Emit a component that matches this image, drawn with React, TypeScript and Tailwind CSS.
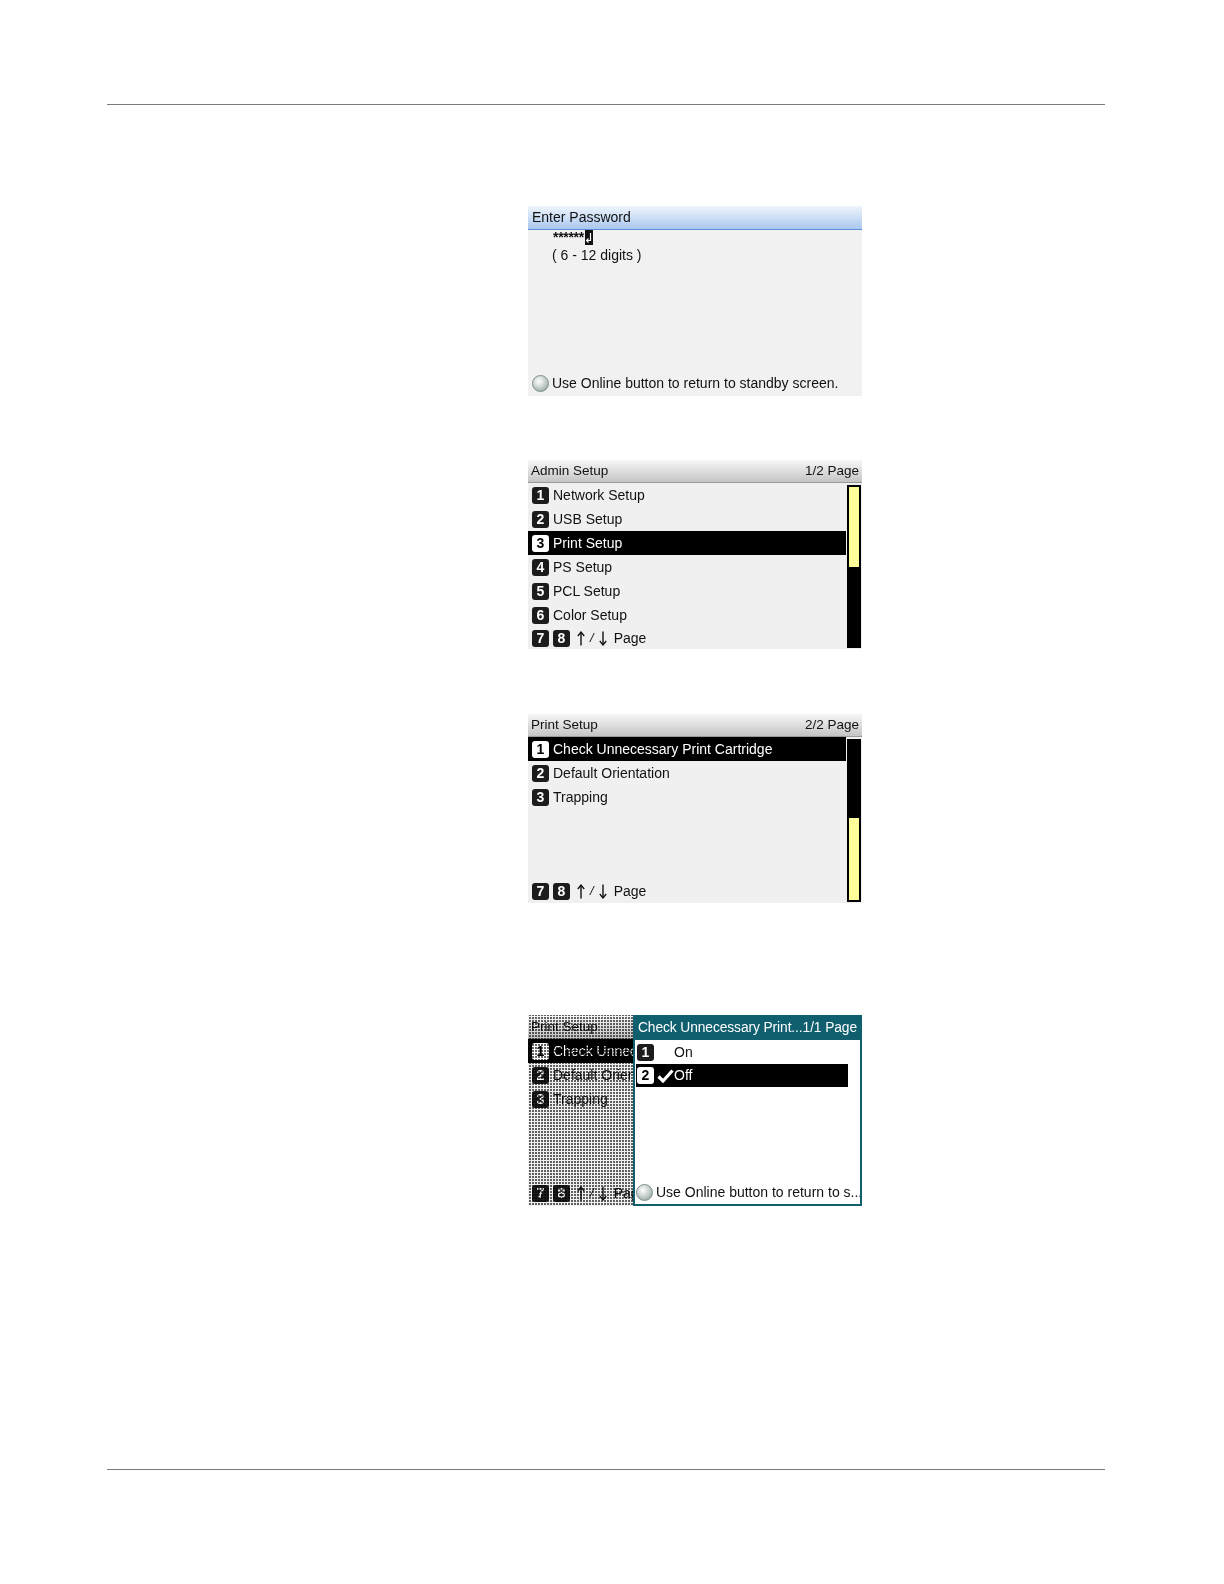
import React from "react";

const FONT = { fontFamily: '"Liberation Sans", Arial, sans-serif' };

function Badge({ n, inv = false }: { n: string; inv?: boolean }) {
  return (
    <span
      className={
        "flex h-[17px] w-[17px] shrink-0 items-center justify-center rounded-[3px] text-[14px] font-bold leading-[17px] " +
        (inv ? "bg-white text-black" : "bg-[#1c1c1c] text-white")
      }
    >
      {n}
    </span>
  );
}

function UpArrow() {
  return (
    <svg width="8" height="15" viewBox="0 0 8 15" className="shrink-0">
      <path d="M4 1.5 V14.5" stroke="#111" strokeWidth="1.4" fill="none" />
      <path d="M0.8 5 L4 1 L7.2 5" stroke="#111" strokeWidth="1.3" fill="none" />
    </svg>
  );
}

function DownArrow() {
  return (
    <svg width="8" height="15" viewBox="0 0 8 15" className="shrink-0">
      <path d="M4 0.5 V13.5" stroke="#111" strokeWidth="1.4" fill="none" />
      <path d="M0.8 10 L4 14 L7.2 10" stroke="#111" strokeWidth="1.3" fill="none" />
    </svg>
  );
}

function PageFooter() {
  return (
    <div className="flex h-[24px] items-center gap-[4px] whitespace-nowrap pl-[4px] text-[14px] text-[#111]">
      <Badge n="7" />
      <Badge n="8" />
      <span className="ml-[3px] flex items-center">
        <UpArrow />
        <span className="mx-[5px] text-[13px] italic">/</span>
        <DownArrow />
        <span className="ml-[7px]">Page</span>
      </span>
    </div>
  );
}

function OnlineDot() {
  return (
    <span className="h-[17px] w-[17px] shrink-0 rounded-full border border-[#7f8f8a] [background-image:radial-gradient(circle_at_40%_35%,#ffffff_0%,#d6dedb_35%,#a3b1ad_75%,#8a9994_100%)]" />
  );
}

function GrayHeader({ left, right }: { left: string; right?: string }) {
  return (
    <div className="flex h-[23px] items-center justify-between border-b border-[#9a9a9a] px-[3px] text-[13.5px] text-[#111] [background-image:linear-gradient(#f7f7f7,#d9d9d9_60%,#c4c4c4)]">
      <span className="whitespace-nowrap">{left}</span>
      {right && <span className="whitespace-nowrap">{right}</span>}
    </div>
  );
}

function Scrollbar({ top }: { top: boolean }) {
  return (
    <div className="mb-[1px] ml-[1px] mr-[1px] mt-[2px] flex w-[14px] flex-col border-2 border-black bg-black">
      {top ? (
        <>
          <div className="h-[80px] bg-[#ffff99]" />
          <div className="flex-1" />
        </>
      ) : (
        <>
          <div className="flex-1" />
          <div className="h-[82px] bg-[#ffff99]" />
        </>
      )}
    </div>
  );
}

function MenuRow({ n, label, hi = false }: { n: string; label: string; hi?: boolean }) {
  return (
    <div
      className={
        "flex h-[24px] items-center gap-[4px] whitespace-nowrap pl-[4px] text-[14px] " +
        (hi ? "bg-black text-white" : "text-[#111]")
      }
    >
      <Badge n={n} inv={hi} />
      <span>{label}</span>
    </div>
  );
}

function Screen1() {
  return (
    <div className="ml-[528px] mt-[101px] flex h-[190px] w-[334px] flex-col bg-[#f1f1f1]">
      <div className="flex h-[24px] items-center border-b border-[#5b8fd6] px-[4px] text-[14px] text-[#111] [background-image:linear-gradient(#eef4fc,#cddff6_50%,#a9c7ef)]">
        Enter Password
      </div>
      <div className="flex h-[15px] items-start pl-[25px] text-[#111]">
        <span className="mt-[1px] text-[14px] font-bold leading-[12px] tracking-[-0.3px]">******</span>
        <svg width="8" height="15" viewBox="0 0 8 15" className="ml-[1px]">
          <rect x="0" y="0" width="8" height="15" fill="#111" />
          <path d="M5.5 3 V10.5 H2" stroke="#fff" strokeWidth="1.2" fill="none" />
          <path d="M3.5 8.5 L1.5 10.5 L3.5 12.5" stroke="#fff" strokeWidth="1.1" fill="none" />
        </svg>
      </div>
      <div className="flex h-[21px] items-center pl-[24px] text-[14px] text-[#111]">( 6 - 12 digits )</div>
      <div className="flex-1" />
      <div className="mb-[2px] flex h-[22px] items-center gap-[3px] whitespace-nowrap pl-[4px] text-[14px] text-[#111]">
        <OnlineDot />
        <span>Use Online button to return to standby screen.</span>
      </div>
    </div>
  );
}

function Screen2() {
  return (
    <div className="ml-[528px] mt-[64px] flex h-[189px] w-[334px] flex-col bg-[#f0f0f0]">
      <GrayHeader left="Admin Setup" right="1/2 Page" />
      <div className="flex min-h-0 flex-1">
        <div className="w-[318px] overflow-hidden">
          <MenuRow n="1" label="Network Setup" />
          <MenuRow n="2" label="USB Setup" />
          <MenuRow n="3" label="Print Setup" hi />
          <MenuRow n="4" label="PS Setup" />
          <MenuRow n="5" label="PCL Setup" />
          <MenuRow n="6" label="Color Setup" />
          <div className="-mt-[1px]">
            <PageFooter />
          </div>
        </div>
        <Scrollbar top />
      </div>
    </div>
  );
}

function PrintSetupList() {
  return (
    <>
      <MenuRow n="1" label="Check Unnecessary Print Cartridge" hi />
      <MenuRow n="2" label="Default Orientation" />
      <MenuRow n="3" label="Trapping" />
      <div className="h-[71px]" />
      <div className="-mt-[1px]">
        <PageFooter />
      </div>
    </>
  );
}

function Screen3() {
  return (
    <div className="ml-[528px] mt-[65px] flex h-[189px] w-[334px] flex-col bg-[#f0f0f0]">
      <GrayHeader left="Print Setup" right="2/2 Page" />
      <div className="flex min-h-0 flex-1">
        <div className="w-[318px] overflow-hidden">
          <PrintSetupList />
        </div>
        <Scrollbar top={false} />
      </div>
    </div>
  );
}

function Screen4() {
  return (
    <div className="ml-[528px] mt-[112px] flex h-[191px] w-[334px]">
      <div className="relative w-[105px] overflow-hidden bg-[#f0f0f0]">
        <div className="w-[334px]">
          <div className="h-[1px]" />
          <GrayHeader left="Print Setup" />
          <PrintSetupList />
        </div>
        <div className="absolute inset-0 bg-[#666666] mix-blend-multiply [background-image:repeating-linear-gradient(90deg,#fff_0_1px,transparent_1px_3px),repeating-linear-gradient(0deg,#fff_0_1px,transparent_1px_3px)]" />
      </div>
      <div className="flex w-[229px] flex-col border-2 border-[#0f5f6f] bg-white">
        <div className="flex h-[23px] items-center whitespace-nowrap bg-[#0f5f6f] pl-[3px] text-[13.8px] tracking-[-0.1px] text-white">
          <span>Check Unnecessary Print...1/1 Page</span>
        </div>
        <div className="pl-[1px] pr-[12px]">
          <div className="flex h-[24px] items-center whitespace-nowrap pl-[1px] text-[14px] text-[#111]">
            <Badge n="1" />
            <span className="ml-[20px]">On</span>
          </div>
          <div className="flex h-[23px] items-center whitespace-nowrap bg-black pl-[1px] text-[14px] text-white">
            <Badge n="2" inv />
            <svg width="17" height="14" viewBox="0 0 17 14" className="ml-[3px] shrink-0">
              <path d="M1.5 7.5 L6 12 L15.5 1.5" stroke="#fff" strokeWidth="3.2" fill="none" strokeLinejoin="miter" />
            </svg>
            <span>Off</span>
          </div>
        </div>
        <div className="flex-1" />
        <div className="mb-[1px] flex h-[22px] items-center gap-[3px] overflow-hidden whitespace-nowrap pl-[1px] text-[14px] text-[#111]">
          <OnlineDot />
          <span>Use Online button to return to s...</span>
        </div>
      </div>
    </div>
  );
}

export default function App() {
  return (
    <div className="relative h-[1584px] w-[1224px] overflow-hidden bg-white" style={FONT}>
      <div className="pt-[104px]">
        <div className="ml-[107px] h-px w-[998px] bg-[#7a7a7a]" />
        <Screen1 />
        <Screen2 />
        <Screen3 />
        <Screen4 />
        <div className="ml-[107px] mt-[263px] h-px w-[998px] bg-[#7a7a7a]" />
      </div>
    </div>
  );
}
